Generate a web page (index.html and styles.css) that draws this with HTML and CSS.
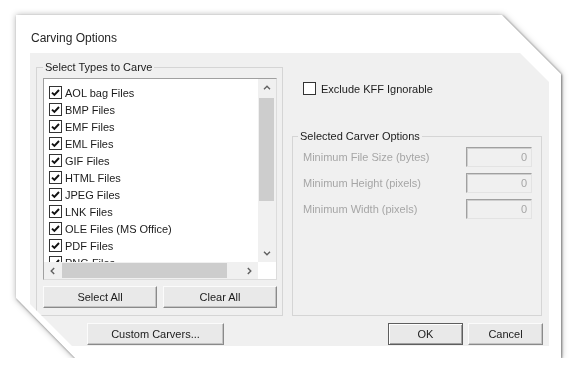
FILE: index.html
```html
<!doctype html>
<html lang="en">
  <head>
    <meta charset="UTF-8" />
    <title>Carving Options</title>
    <link rel="stylesheet" href="styles.css">
  </head>
  <body>
    <div class="shot">
      <div class="window">
        <div class="titlebar">Carving Options</div>

        <div class="client">
          <div class="main">
            <fieldset class="group types">
              <legend>Select Types to Carve</legend>

              <div class="listbox">
                <ul class="items">
                  <li><span class="check on"><svg viewBox="0 0 11 11"><path d="M2 5.6 4.4 8 9 3" /></svg></span>AOL bag Files</li>
                  <li><span class="check on"><svg viewBox="0 0 11 11"><path d="M2 5.6 4.4 8 9 3" /></svg></span>BMP Files</li>
                  <li><span class="check on"><svg viewBox="0 0 11 11"><path d="M2 5.6 4.4 8 9 3" /></svg></span>EMF Files</li>
                  <li><span class="check on"><svg viewBox="0 0 11 11"><path d="M2 5.6 4.4 8 9 3" /></svg></span>EML Files</li>
                  <li><span class="check on"><svg viewBox="0 0 11 11"><path d="M2 5.6 4.4 8 9 3" /></svg></span>GIF Files</li>
                  <li><span class="check on"><svg viewBox="0 0 11 11"><path d="M2 5.6 4.4 8 9 3" /></svg></span>HTML Files</li>
                  <li><span class="check on"><svg viewBox="0 0 11 11"><path d="M2 5.6 4.4 8 9 3" /></svg></span>JPEG Files</li>
                  <li><span class="check on"><svg viewBox="0 0 11 11"><path d="M2 5.6 4.4 8 9 3" /></svg></span>LNK Files</li>
                  <li><span class="check on"><svg viewBox="0 0 11 11"><path d="M2 5.6 4.4 8 9 3" /></svg></span>OLE Files (MS Office)</li>
                  <li><span class="check on"><svg viewBox="0 0 11 11"><path d="M2 5.6 4.4 8 9 3" /></svg></span>PDF Files</li>
                  <li><span class="check on"><svg viewBox="0 0 11 11"><path d="M2 5.6 4.4 8 9 3" /></svg></span>PNG Files</li>
                </ul>

                <div class="vscroll">
                  <span class="arrow"><svg viewBox="0 0 8 5"><path d="M1 4.2 4 1.2 7 4.2" /></svg></span>
                  <span class="track"><span class="thumb"></span></span>
                  <span class="arrow"><svg viewBox="0 0 8 5"><path d="M1 0.8 4 3.8 7 0.8" /></svg></span>
                </div>

                <div class="hscroll">
                  <span class="arrow"><svg class="side-arrow" viewBox="0 0 5 8"><path d="M4.2 1 1.2 4 4.2 7" /></svg></span>
                  <span class="track"><span class="thumb"></span></span>
                  <span class="arrow"><svg class="side-arrow" viewBox="0 0 5 8"><path d="M0.8 1 3.8 4 0.8 7" /></svg></span>
                </div>

                <div class="corner"></div>
              </div>

              <div class="pair">
                <button class="btn">Select All</button>
                <button class="btn">Clear All</button>
              </div>
            </fieldset>

            <div class="side">
              <label class="option"><span class="check"></span>Exclude KFF Ignorable</label>

              <fieldset class="group carver">
                <legend>Selected Carver Options</legend>
                <div class="field">
                  <span>Minimum File Size (bytes)</span>
                  <span class="input">0</span>
                </div>
                <div class="field">
                  <span>Minimum Height (pixels)</span>
                  <span class="input">0</span>
                </div>
                <div class="field">
                  <span>Minimum Width (pixels)</span>
                  <span class="input">0</span>
                </div>
              </fieldset>
            </div>
          </div>

          <div class="actions">
            <button class="btn custom">Custom Carvers...</button>
            <button class="btn ok">OK</button>
            <button class="btn cancel">Cancel</button>
          </div>
        </div>
      </div>
    </div>
  </body>
</html>
```

FILE: styles.css
```css
* {
  box-sizing: border-box;
}

body {
  margin: 0;
  background: #fff;
  font-family: "Liberation Sans", Arial, sans-serif;
  font-size: 11px;
  color: #1b1b1b;
}

/* screenshot frame with the cut corners */
.shot {
  width: max-content;
  padding: 15px 0 0 16px;
  filter: drop-shadow(1px 1px 1px rgba(0, 0, 0, 0.45))
    drop-shadow(0 0 3px rgba(0, 0, 0, 0.3));
}

.window {
  width: 545px;
  height: 343px;
  background: #fff;
  clip-path: polygon(0 0, 486px 0, 100% 59px, 100% 100%, 59px 100%, 0 283px);
}

.titlebar {
  height: 38px;
  padding: 15px 0 0 15px;
  font-size: 12px;
  line-height: 16px;
  color: #262626;
}

.client {
  margin-left: 14px;
  width: 519px;
  height: 293px;
  padding: 7px 0 0 6px;
  background: #f0f0f0;
  clip-path: polygon(0 0, 490px 0, 100% 29px, 100% 100%, 42px 100%, 0 251px);
}

.main {
  display: flex;
  gap: 9px;
  height: 256px;
}

.group {
  margin: 0;
  min-width: 0;
  border: 1px solid #d5d5d5;
}

.group legend {
  padding: 0 2px;
  line-height: 14px;
}

.types {
  width: 247px;
  height: 256px;
  padding: 4px 5px 7px 6px;
}

/* list box */
.listbox {
  height: 202px;
  display: grid;
  grid-template-columns: 1fr 18px;
  grid-template-rows: 1fr 17px;
  background: #fff;
  border: 1px solid;
  border-color: #a0a0a0 #dcdcdc #dcdcdc #a0a0a0;
}

.items {
  list-style: none;
  margin: 0;
  padding: 5px 0 0 5px;
  overflow: hidden;
}

.items li {
  display: flex;
  align-items: center;
  gap: 3px;
  height: 17px;
  white-space: nowrap;
}

.check {
  display: inline-flex;
  align-items: center;
  justify-content: center;
  width: 13px;
  height: 13px;
  flex: none;
  background: #fff;
  border: 1px solid #333;
}

.check svg {
  width: 11px;
  height: 11px;
  fill: none;
  stroke: #111;
  stroke-width: 1.9;
}

.vscroll,
.hscroll {
  display: flex;
  background: #f0f0f0;
}

.vscroll {
  flex-direction: column;
}

.arrow {
  display: flex;
  align-items: center;
  justify-content: center;
  flex: none;
  width: 17px;
  height: 17px;
}

.vscroll .arrow {
  width: auto;
}

.arrow svg {
  width: 8px;
  height: 5px;
  fill: none;
  stroke: #606060;
  stroke-width: 1.4;
}

.arrow .side-arrow {
  width: 5px;
  height: 8px;
}

.track {
  flex: 1;
  display: block;
}

.vscroll .track {
  padding: 2px 2px 0 1px;
}

.vscroll .thumb {
  display: block;
  height: 103px;
  background: #cdcdcd;
}

.hscroll .track {
  padding: 1px 0 1px 1px;
}

.hscroll .thumb {
  display: block;
  width: 165px;
  height: 100%;
  background: #cdcdcd;
}

.corner {
  background: #fff;
}

/* buttons */
.btn {
  height: 22px;
  padding: 0;
  font: inherit;
  color: #1b1b1b;
  background: #e9e9e9;
  border: 1px solid;
  border-color: #fbfbfb #8a8a8a #8a8a8a #fbfbfb;
  box-shadow: inset -1px -1px 0 #c4c4c4;
}

.pair {
  display: flex;
  gap: 6px;
  margin-top: 6px;
}

.pair .btn {
  flex: 1;
}

/* right column */
.side {
  width: 250px;
  display: flex;
  flex-direction: column;
}

.option {
  display: flex;
  align-items: center;
  gap: 5px;
  height: 15px;
  margin: 21px 0 0 11px;
}

.carver {
  margin-top: auto;
  height: 187px;
  padding: 4px 9px 0 5px;
}

.field {
  display: flex;
  align-items: center;
  justify-content: space-between;
  height: 20px;
  padding-left: 5px;
  color: #a6a6a6;
}

.field + .field {
  margin-top: 6px;
}

.input {
  width: 66px;
  height: 20px;
  padding-right: 4px;
  line-height: 18px;
  text-align: right;
  background: #f0f0f0;
  border: 1px solid;
  border-color: #a0a0a0 #e3e3e3 #e3e3e3 #a0a0a0;
  box-shadow: inset 1px 1px 0 #cfcfcf;
}

.actions {
  display: flex;
  margin-top: 7px;
  padding-right: 6px;
}

.custom {
  width: 137px;
  margin-left: 51px;
}

.ok {
  width: 75px;
  margin-left: auto;
  border-color: #5e5e5e;
  box-shadow: inset 1px 1px 0 #fff, inset -1px -1px 0 #a0a0a0;
}

.cancel {
  width: 75px;
  margin-left: 5px;
}
```
